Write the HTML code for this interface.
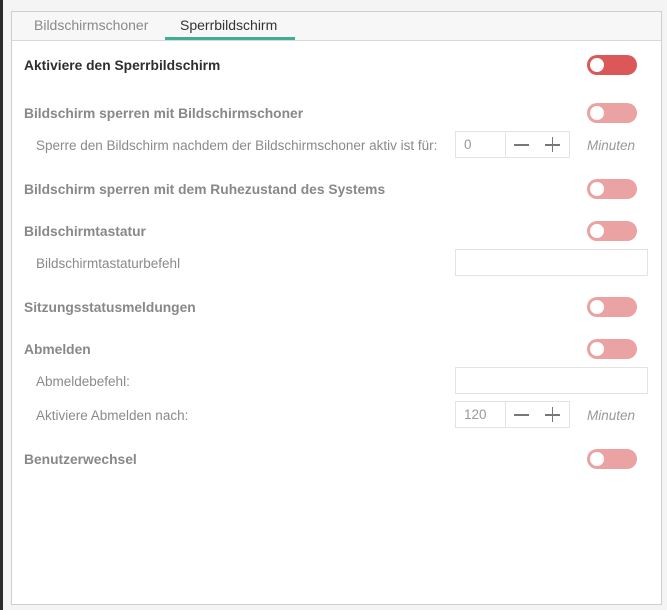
<!DOCTYPE html>
<html><head><style>
*{margin:0;padding:0;box-sizing:border-box}
body{width:667px;height:610px;background:#f4f4f4;position:relative;overflow:hidden;font-family:"Liberation Sans",sans-serif;font-size:13px}
.strip{position:absolute;left:0;top:0;width:3px;height:610px;background:#2a2a2a}
.frame{position:absolute;left:11px;top:11px;width:651px;height:594px;border:1px solid #cfcfcf;background:#fff}
.tabs{position:absolute;left:0;top:0;width:649px;height:29px;background:#f7f7f7;border-bottom:1px solid #d8d8d8}
.tab{position:absolute;top:5px;font-size:14px;color:#8a8a8a}
.ul{position:absolute;left:153px;top:25px;width:130px;height:3px;background:#3fae94}
.a{position:absolute;font-size:13.5px}
.b{font-weight:bold;color:#888;font-size:13.8px}
.s{color:#8a8a8a}
.tg{position:absolute;left:587px;width:50px;height:20px;border-radius:10px;background:#eaa2a2}
.tg:after{content:"";position:absolute;left:3px;top:3px;width:14px;height:14px;border-radius:7px;background:#fff}
.in{position:absolute;left:455px;width:193px;height:27px;border:1px solid #e3e3e3;background:#fff}
.sp{position:absolute;left:455px;width:115px;height:27px;border:1px solid #e3e3e3}
.sp span{position:absolute;left:8px;top:5px;color:#999;font-size:13.5px}
.sp i{position:absolute;left:49px;top:0;width:1px;height:25px;background:#e3e3e3}
.mn{position:absolute;left:514px;top:13px;width:15px;height:1.5px;background:#777}
.pl{position:absolute;left:545px;top:13px;width:15px;height:1.5px;background:#777}
.pl2{position:absolute;left:551.5px;top:6px;width:1.5px;height:15px;background:#777}
.m{position:absolute;left:587px;font-style:italic;color:#999;font-size:13.5px}
</style></head><body>
<div class="strip"></div>
<div style="position:absolute;left:0;top:0;width:667px;height:610px">
<div class="frame"><div class="tabs"><div class="tab" style="left:22px">Bildschirmschoner</div><div class="tab" style="left:168px;color:#333">Sperrbildschirm</div><div class="ul"></div></div></div>
<div class="a" style="left:24px;top:58px;font-weight:bold;color:#2e2e2e;font-size:13.8px">Aktiviere den Sperrbildschirm</div>
<div class="tg" style="top:55px;background:#dc5858"></div>
<div class="a b" style="left:24px;top:106px">Bildschirm sperren mit Bildschirmschoner</div>
<div class="tg" style="top:103px"></div>
<div class="a s" style="left:36px;top:138px">Sperre den Bildschirm nachdem der Bildschirmschoner aktiv ist für:</div>
<div class="sp" style="top:131px"><span>0</span><i></i></div>
<div style="position:absolute;left:0;top:131px"><div class="mn"></div><div class="pl"></div><div class="pl2"></div></div>
<div class="m" style="top:138px">Minuten</div>
<div class="a b" style="left:24px;top:182px">Bildschirm sperren mit dem Ruhezustand des Systems</div>
<div class="tg" style="top:179px"></div>
<div class="a b" style="left:24px;top:224px">Bildschirmtastatur</div>
<div class="tg" style="top:221px"></div>
<div class="a s" style="left:36px;top:256px">Bildschirmtastaturbefehl</div>
<div class="in" style="top:249px"></div>
<div class="a b" style="left:24px;top:300px">Sitzungsstatusmeldungen</div>
<div class="tg" style="top:297px"></div>
<div class="a b" style="left:24px;top:342px">Abmelden</div>
<div class="tg" style="top:339px"></div>
<div class="a s" style="left:36px;top:374px">Abmeldebefehl:</div>
<div class="in" style="top:367px"></div>
<div class="a s" style="left:36px;top:408px">Aktiviere Abmelden nach:</div>
<div class="sp" style="top:401px"><span>120</span><i></i></div>
<div style="position:absolute;left:0;top:401px"><div class="mn"></div><div class="pl"></div><div class="pl2"></div></div>
<div class="m" style="top:408px">Minuten</div>
<div class="a b" style="left:24px;top:452px">Benutzerwechsel</div>
<div class="tg" style="top:449px"></div>
</div>
</body></html>
